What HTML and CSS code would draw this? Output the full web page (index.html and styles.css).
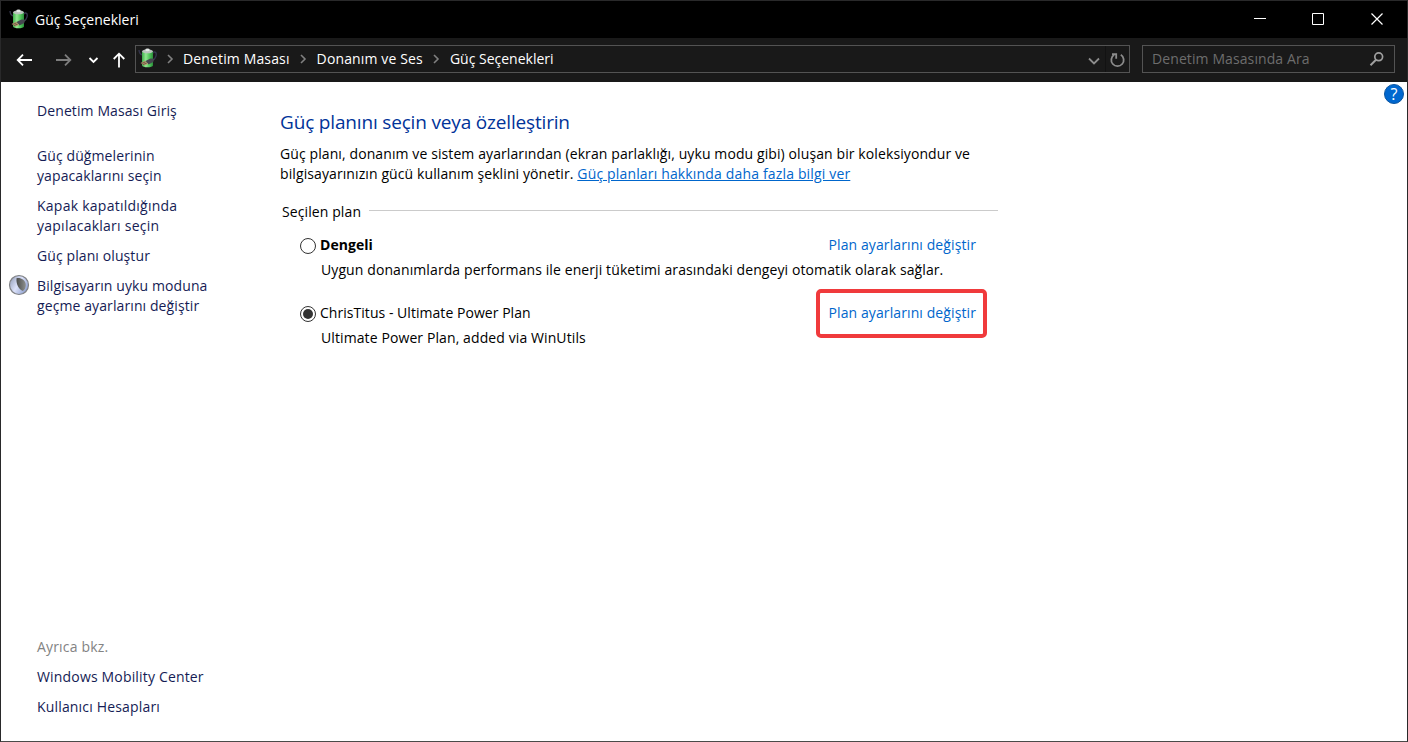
FILE: index.html
```html
<!DOCTYPE html>
<html lang="tr">
<head>
    <meta charset="UTF-8">
    <meta name="viewport" content="width=device-width, initial-scale=1.0">
    <title>Güç Seçenekleri</title>
    <link rel="stylesheet" href="styles.css">
</head>
<body>
    <!-- Shared battery icon -->
    <svg class="defs" width="0" height="0">
        <defs>
            <linearGradient id="cell" x1="0" x2="1" y1="0" y2="0">
                <stop offset="0" stop-color="#3fae4c"/>
                <stop offset="0.35" stop-color="#93e892"/>
                <stop offset="0.65" stop-color="#55c95e"/>
                <stop offset="1" stop-color="#2a8f3a"/>
            </linearGradient>
            <symbol id="battery" viewBox="0 0 20 20">
                <path d="M1 2c.2 3 1.200 4.500 3.500 5M14.500 5.500c1-2.500 3.800-1.800 3.800.8 0 3-1.500 3.500-2.300 5.500" fill="none" stroke="#34344c" stroke-width="1.400"/>
                <path d="M4 3.500v14c0 2.400 11 2.400 11 0v-14z" fill="url(#cell)"/>
                <ellipse cx="9.500" cy="3.300" rx="5.500" ry="2" fill="#b9c4bd"/>
                <ellipse cx="9.500" cy="1.900" rx="2.200" ry="1.300" fill="#e6eae8"/>
                <path d="M7.500 13l5-2.500 4 .3-1.300 3.200-4.700 2.500z" fill="#45464f"/>
                <path d="M2.500 15l4.500-2.200 3.200 3L6.500 17.500z" fill="#b59a72"/>
                <path d="M3.500 15.500l4-1.600M5 16.600l3.800-1.600" stroke="#54452f" stroke-width=".7"/>
            </symbol>
        </defs>
    </svg>

    <div class="window">
        <header class="titlebar">
            <svg class="app-icon" width="20" height="20"><use href="#battery"/></svg>
            <span class="title">Güç Seçenekleri</span>
            <div class="window-buttons">
                <svg width="59" height="37" viewBox="0 0 59 37"><path d="M24 17.500h12" stroke="#fff"/></svg>
                <svg width="59" height="37" viewBox="0 0 59 37"><path d="M23.500 12.500h11v11h-11z" fill="none" stroke="#fff"/></svg>
                <svg width="58" height="37" viewBox="0 0 58 37"><path d="M23.500 12.500l11 11M34.500 12.500l-11 11" stroke="#fff" stroke-width="1.200"/></svg>
            </div>
        </header>

        <nav class="navbar">
            <svg class="nav-buttons" width="134" height="44" viewBox="0 0 134 44" fill="none" stroke="#fff" stroke-width="1.800">
                <path d="M31 22H17M22 16.700L16.700 22l5.300 5.300"/>
                <path d="M55 22h14M64 16.700l5.300 5.300-5.300 5.300" stroke="#7d7d7d"/>
                <path d="M88.500 20l4 4 4-4"/>
                <path d="M118 29.500V16M112.700 21l5.300-5.300 5.300 5.300"/>
            </svg>
            <div class="address">
                <svg class="address-icon" width="20" height="20"><use href="#battery"/></svg>
                <svg class="chevron first" width="8" height="10" viewBox="0 0 8 10"><path d="M2 1l4 4-4 4"/></svg>
                <span class="crumb">Denetim Masası</span>
                <svg class="chevron" width="8" height="10" viewBox="0 0 8 10"><path d="M2 1l4 4-4 4"/></svg>
                <span class="crumb">Donanım ve Ses</span>
                <svg class="chevron" width="8" height="10" viewBox="0 0 8 10"><path d="M2 1l4 4-4 4"/></svg>
                <span class="crumb last">Güç Seçenekleri</span>
                <svg class="address-tools" width="46" height="26" viewBox="0 0 46 26" fill="none" stroke="#8c8c8c" stroke-width="1.800">
                    <path d="M6 12.500l5 5 5-5"/>
                    <path d="M22.500 0v26" stroke="#121212" stroke-width="1"/>
                    <path d="M37.800 8.700a6.200 6.200 0 1 1-6.600 0M29 8.200h4.200v4.500"/>
                </svg>
            </div>
            <div class="search">
                <span>Denetim Masasında Ara</span>
                <svg width="16" height="16" viewBox="0 0 16 16" fill="none" stroke="#a0a0a0" stroke-width="1.700"><circle cx="9.700" cy="5.800" r="3.900"/><path d="M7 8.700l-5.500 5.500" stroke-width="2"/></svg>
            </div>
        </nav>

        <div class="content">
            <aside class="sidebar">
                <a class="home">Denetim Masası Giriş</a>
                <a>Güç düğmelerinin<br>yapacaklarını seçin</a>
                <a class="lid">Kapak kapatıldığında<br>yapılacakları seçin</a>
                <a>Güç planı oluştur</a>
                <a class="sleep">
                    <svg class="moon" width="22" height="22" viewBox="0 0 22 22">
                        <defs>
                            <linearGradient id="moon-light" x1="0" x2="1" y1="0.200" y2="0.800">
                                <stop offset="0" stop-color="#98a2bd"/>
                                <stop offset="0.450" stop-color="#dce2fa"/>
                                <stop offset="1" stop-color="#8296c8"/>
                            </linearGradient>
                            <linearGradient id="moon-dark" x1="0" x2="1">
                                <stop offset="0" stop-color="#4b4d4c"/>
                                <stop offset="1" stop-color="#8d8f8d"/>
                            </linearGradient>
                        </defs>
                        <circle cx="11" cy="11" r="9.500" fill="url(#moon-light)" stroke="#808285" stroke-width="1.200"/>
                        <path d="M8.500 4.300c3-1.300 9.300 1.200 9.300 6.700 0 3-1.300 5-3 6C11 15.500 8 11 8.500 4.300z" fill="url(#moon-dark)"/>
                    </svg>
                    Bilgisayarın uyku moduna<br>geçme ayarlarını değiştir
                </a>
                <div class="see-also">
                    <span>Ayrıca bkz.</span>
                    <a>Windows Mobility Center</a>
                    <a>Kullanıcı Hesapları</a>
                </div>
            </aside>

            <main class="main">
                <h1>Güç planını seçin veya özelleştirin</h1>
                <p class="intro">Güç planı, donanım ve sistem ayarlarından (ekran parlaklığı, uyku modu gibi) oluşan bir koleksiyondur ve<br>bilgisayarınızın gücü kullanım şeklini yönetir. <a class="more">Güç planları hakkında daha fazla bilgi ver</a></p>
                <div class="group-title"><span>Seçilen plan</span></div>

                <section class="plan">
                    <div class="plan-row">
                        <span class="radio"></span>
                        <strong class="plan-name">Dengeli</strong>
                        <a class="change">Plan ayarlarını değiştir</a>
                    </div>
                    <p class="plan-text">Uygun donanımlarda performans ile enerji tüketimi arasındaki dengeyi otomatik olarak sağlar.</p>
                </section>

                <section class="plan">
                    <div class="plan-row">
                        <span class="radio checked"></span>
                        <span class="plan-name">ChrisTitus - Ultimate Power Plan</span>
                        <a class="change marked">Plan ayarlarını değiştir</a>
                    </div>
                    <p class="plan-text">Ultimate Power Plan, added via WinUtils</p>
                </section>
            </main>
            <span class="help">?</span>
        </div>
    </div>
</body>
</html>
```
FILE: styles.css
```css
*,
*::before,
*::after {
    margin: 0;
    padding: 0;
    box-sizing: border-box;
}

body {
    font-family: "Segoe UI", "Open Sans", "Noto Sans", sans-serif;
    font-size: 14px;
    line-height: 20px;
    letter-spacing: 0.1px;
    color: #000;
    white-space: nowrap;
    overflow: hidden;
}

svg {
    display: block;
    flex-shrink: 0;
}

.defs {
    position: absolute;
}

.window {
    height: 742px;
    display: flex;
    flex-direction: column;
    border: 1px solid #29292a;
    border-bottom-color: #4a4a49;
    background: #fff;
}

.titlebar {
    display: flex;
    align-items: center;
    height: 37px;
    padding: 0 1px 0 8px;
    background: #000;
    color: #fff;
}

.app-icon {
    margin-bottom: 1px;
}

.title {
    margin-left: 6px;
    letter-spacing: 0;
}

.window-buttons {
    display: flex;
    margin-left: auto;
}

.navbar {
    display: flex;
    align-items: center;
    height: 44px;
    padding-right: 12px;
    background: #191919;
    color: #fff;
}

.address,
.search {
    display: flex;
    align-items: center;
    height: 28px;
    margin-bottom: 2px;
    border: 1px solid #535353;
}

.address {
    width: 995px;
    padding-left: 2px;
}

.address-icon {
    margin-bottom: 2px;
}

.crumb {
    letter-spacing: 0.14px;
}

.last {
    letter-spacing: 0;
}

.chevron {
    margin: 0 10px 0 9px;
    fill: none;
    stroke: #808080;
    stroke-width: 1.6;
}

.first {
    margin: 0 9px 0 8px;
}

.address-tools {
    margin-left: auto;
}

.search {
    flex: 1;
    justify-content: space-between;
    margin-left: 12px;
    padding: 0 9px 0 9px;
    color: #6d6d6d;
}

.content {
    position: relative;
    flex: 1;
    display: flex;
}

.sidebar {
    display: flex;
    flex-direction: column;
    gap: 10px;
    width: 279px;
    padding: 19px 0 24px 36px;
    color: #151c55;
}

.home {
    margin-bottom: 15px;
}

.lid {
    letter-spacing: 0.25px;
}

.sleep {
    position: relative;
}

.moon {
    position: absolute;
    left: -29px;
    top: -2px;
}

.see-also {
    display: flex;
    flex-direction: column;
    gap: 10px;
    margin-top: auto;
    letter-spacing: 0.17px;
}

.see-also span {
    color: #838383;
}

.main {
    width: 718px;
    padding-top: 28px;
}

h1 {
    font-size: 19px;
    font-weight: 400;
    line-height: 24px;
    letter-spacing: -0.17px;
    color: #003399;
}

.intro {
    margin-top: 10px;
}

.more,
.change {
    color: #0066cc;
}

.more {
    letter-spacing: 0.16px;
    text-decoration: underline;
}

.group-title {
    display: flex;
    align-items: center;
    gap: 8px;
    margin-top: 18px;
    padding-left: 2px;
}

.group-title::after {
    content: "";
    flex: 1;
    height: 1px;
    margin-bottom: 3px;
    background: #cbcbcb;
}

.plan {
    margin-top: 13px;
    padding: 0 22px 0 20px;
}

.plan + .plan {
    margin-top: 23px;
}

.plan-row {
    display: flex;
    align-items: center;
}

.radio {
    width: 16px;
    height: 16px;
    margin: 2px 4px 0 0;
    border: 1px solid #333;
    border-radius: 50%;
}

.plan-name {
    letter-spacing: 0.04px;
}

.checked {
    padding: 2px;
    background: #333 content-box;
}

.change {
    position: relative;
    margin-left: auto;
}

/* highlight frame around the link */
.marked::after {
    content: "";
    position: absolute;
    right: -11px;
    top: -14px;
    width: 171px;
    height: 49px;
    border: 4px solid #f03a3c;
    border-radius: 5px;
}

.plan-text {
    margin-top: 5px;
    padding-left: 21px;
}

.help {
    position: absolute;
    top: 2px;
    right: 3px;
    width: 20px;
    height: 20px;
    border: 1px solid #0b55a0;
    border-radius: 50%;
    background: #0067cf;
    color: #fff;
    font-size: 16px;
    line-height: 18px;
    text-align: center;
}
```
